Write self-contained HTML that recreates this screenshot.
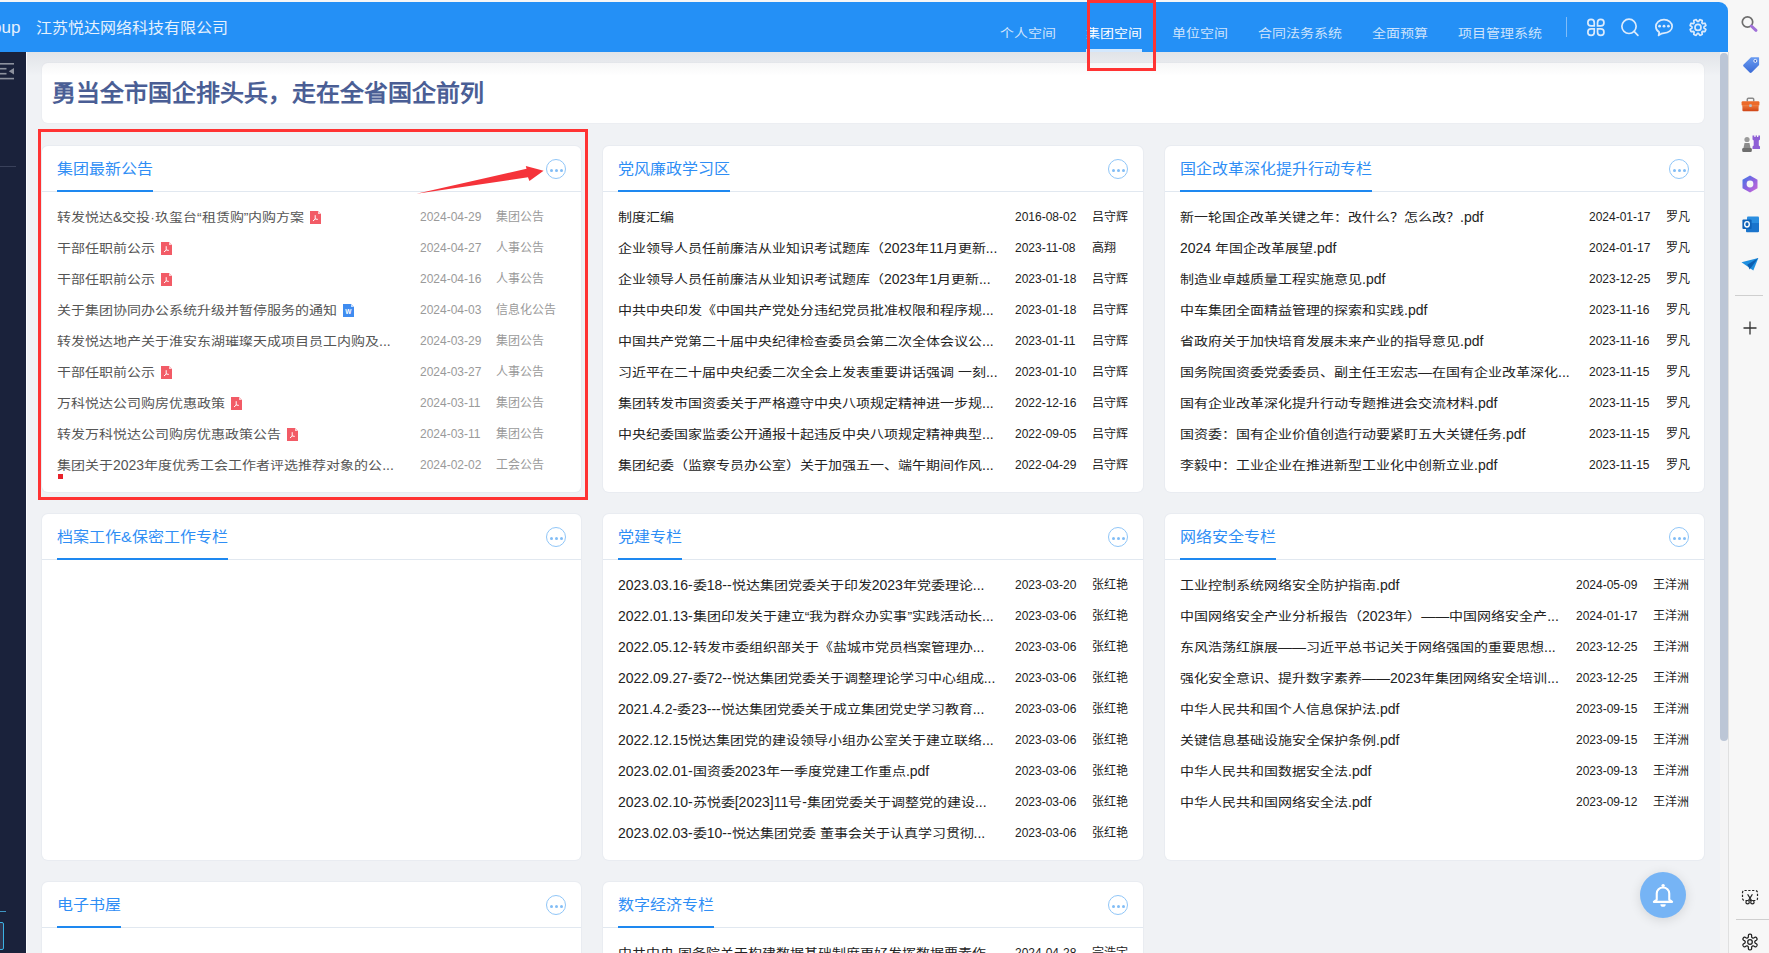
<!DOCTYPE html>
<html lang="zh-CN"><head><meta charset="utf-8"><title>集团空间</title>
<style>
*{margin:0;padding:0;box-sizing:border-box}
html,body{width:1769px;height:953px;overflow:hidden;background:#f6f6f6;font-family:"Liberation Sans",sans-serif}
.abs{position:absolute}
#top{position:absolute;left:0;top:2px;width:1728px;height:50px;background:#2490f6;border-top-right-radius:9px}
#brand{position:absolute;left:0;top:16px;font-size:16px;line-height:20px;color:#e6f1fd;white-space:nowrap}
#brand b{position:absolute;left:-8px;top:0;font-weight:normal;font-size:17px}
#brand span{position:absolute;left:36px;top:0}
.nav{position:absolute;top:22px;font-size:14px;line-height:18px;color:#cfe4fc;white-space:nowrap}
.nav.on{color:#fff}
#navline{position:absolute;left:1086px;top:47px;width:56px;height:3px;background:#d4e8fd}
#vdiv{position:absolute;left:1566px;top:15px;width:1px;height:20px;background:#7fbcf8}
.ti{position:absolute;top:15px}
#side{position:absolute;left:0;top:52px;width:27px;height:901px;background:#1a223b;border-right:1px solid #fcfdff}
#main{position:absolute;left:27px;top:52px;width:1693px;height:901px;background:#f0f2f5}
#sbar{position:absolute;left:1720px;top:52px;width:8px;height:901px;background:#f4f4f5}
#thumb{position:absolute;left:1720px;top:53px;width:8px;height:688px;background:#bcc6d6;border-radius:4px}
#rp{position:absolute;left:1728px;top:0;width:41px;height:953px;background:#f7f7f7}
#rpline{position:absolute;left:1728px;top:52px;width:1px;height:901px;background:#e0e0e0}
#hshadow{position:absolute;left:27px;top:52px;width:1693px;height:24px;background:linear-gradient(rgba(40,50,70,.075),rgba(40,50,70,0))}
.banner{position:absolute;left:42px;top:63px;width:1662px;height:60px;background:#fff;border-radius:6px;box-shadow:0 0 0 1px #eceef2}
.banner h1{position:absolute;left:10px;top:1px;font-size:24px;line-height:60px;font-weight:bold;color:#4a5e95;white-space:nowrap}
.card{position:absolute;height:346px;background:#fff;border-radius:6px;box-shadow:0 0 0 1px #e9ecf1}
.ch{position:absolute;left:0;top:0;width:100%;height:46px;border-bottom:1px solid #e1e8f0}
.ct{position:absolute;left:15px;top:13px;font-size:16px;line-height:20px;color:#2f8ef5;white-space:nowrap;padding-bottom:11px;border-bottom:2px solid #1e88f0}
.more{position:absolute;right:15px;top:13px;width:20px;height:20px;border:1px solid #90c6f8;border-radius:50%}
.more i{position:absolute;top:9px;width:3px;height:3px;border-radius:50%;background:#82bdf6}
.more i:nth-child(1){left:2.5px}.more i:nth-child(2){left:7.5px}.more i:nth-child(3){left:12.5px}
.row{position:absolute;left:0;width:100%;height:18px;white-space:nowrap}
.rt{position:absolute;left:15px;top:0;font-size:14px;line-height:18px;color:#222}
.rd,.ra{position:absolute;top:2px;font-size:12px;line-height:14px;color:#222}
.row.g .rt{color:#555}
.row.g .rd,.row.g .ra{color:#9a9a9a}
.fi{vertical-align:-2px;margin-left:6px}
#redbox1{position:absolute;left:38px;top:129px;width:550px;height:371px;border:3px solid #ff3333}
#redbox2{position:absolute;left:1087px;top:0;width:69px;height:71px;border:3px solid #ff3333}
#bell{position:absolute;left:1640px;top:872px;width:46px;height:46px;border-radius:50%;background:#76b4f5;box-shadow:0 2px 12px rgba(0,0,0,.12)}
.ri{position:absolute;left:12px}
.k{display:inline-block;transform:translateY(1px) scaleY(.86)}
.k16{display:inline-block;font-style:normal;transform:scaleY(.9)}
.k24{display:inline-block;transform:scaleY(.93)}

</style></head><body>
<div id="top">
  <div id="brand"><b>oup</b><span><i class="k16">江苏悦达网络科技有限公司</i></span></div>
  <div class="nav" style="left:1000px"><span class="k">个人空间</span></div>
  <div class="nav on" style="left:1086px"><span class="k">集团空间</span></div>
  <div class="nav" style="left:1172px"><span class="k">单位空间</span></div>
  <div class="nav" style="left:1258px"><span class="k">合同法务系统</span></div>
  <div class="nav" style="left:1372px"><span class="k">全面预算</span></div>
  <div class="nav" style="left:1458px"><span class="k">项目管理系统</span></div>
  <div id="navline"></div>
  <div id="vdiv"></div>
</div>
<svg style="position:absolute;left:0;top:0" width="1728" height="52" fill="none" stroke="#dcebfc" stroke-width="1.7">
  <path d="M1594.25 25.85H1591.05A3.2 3.2 0 1 1 1594.25 22.65Z"/>
  <path d="M1597.55 25.85H1600.75A3.2 3.2 0 1 0 1597.55 22.65Z"/>
  <path d="M1594.25 28.95H1591.05A3.2 3.2 0 1 0 1594.25 32.15Z"/>
  <path d="M1597.55 28.95H1600.75A3.2 3.2 0 1 1 1597.55 32.15Z"/>
  <circle cx="1629" cy="26.35" r="7.15"/><path d="M1634.1 31.4L1637.9 35.3" stroke-linecap="round"/>
  <path d="M1659.3 32.2C1657 30.8 1655.85 28.7 1655.85 26.4C1655.85 22.6 1659.5 19.55 1664 19.55C1668.5 19.55 1672.15 22.6 1672.15 26.4C1672.15 30.2 1668.5 33.1 1664 33.1C1662.2 33.1 1660.6 33.9 1658.6 35.4Z" stroke-linejoin="round"/>
  <circle cx="1659.6" cy="26.2" r="1.4" fill="#dcebfc" stroke="none"/><circle cx="1664" cy="26.2" r="1.4" fill="#dcebfc" stroke="none"/><circle cx="1668.4" cy="26.2" r="1.4" fill="#dcebfc" stroke="none"/>
  <path d="M1703.98 27.97 L1705.88 29.34 A8.1 8.1 0 0 1 1704.91 31.68 L1702.59 31.31 A6.0 6.0 0 0 1 1701.86 32.04 L1702.23 34.36 A8.1 8.1 0 0 1 1699.89 35.33 L1698.52 33.43 A6.0 6.0 0 0 1 1697.48 33.43 L1696.11 35.33 A8.1 8.1 0 0 1 1693.77 34.36 L1694.14 32.04 A6.0 6.0 0 0 1 1693.41 31.31 L1691.09 31.68 A8.1 8.1 0 0 1 1690.12 29.34 L1692.02 27.97 A6.0 6.0 0 0 1 1692.02 26.93 L1690.12 25.56 A8.1 8.1 0 0 1 1691.09 23.22 L1693.41 23.59 A6.0 6.0 0 0 1 1694.14 22.86 L1693.77 20.54 A8.1 8.1 0 0 1 1696.11 19.57 L1697.48 21.47 A6.0 6.0 0 0 1 1698.52 21.47 L1699.89 19.57 A8.1 8.1 0 0 1 1702.23 20.54 L1701.86 22.86 A6.0 6.0 0 0 1 1702.59 23.59 L1704.91 23.22 A8.1 8.1 0 0 1 1705.88 25.56 L1703.98 26.93 A6.0 6.0 0 0 1 1703.98 27.97Z" stroke-linejoin="round"/><circle cx="1698" cy="27.4" r="3.0"/>
</svg>
<div id="side">
  <svg style="position:absolute;left:0;top:11px" width="16" height="18" viewBox="0 0 16 18">
    <rect x="0" y="0" width="14" height="1.6" fill="#8c919d"/><rect x="0" y="4.9" width="6.5" height="1.6" fill="#8c919d"/>
    <rect x="0" y="9.9" width="6.5" height="1.6" fill="#8c919d"/><rect x="0" y="14.8" width="14" height="1.6" fill="#8c919d"/>
    <path d="M14 5L8.8 8.2L14 11.4Z" fill="#8c919d"/>
  </svg>
  <div style="position:absolute;left:0;top:114px;width:16px;height:1px;background:#39415a"></div>
  <div style="position:absolute;left:0;top:859px;width:6px;height:1px;background:#3f95c2"></div>
  <div style="position:absolute;left:-3px;top:870px;width:7px;height:28px;border:1px solid #3bb2e4;border-radius:2px;background:#2f3651"></div>
</div>
<div id="main"></div>
<div id="sbar"></div><div id="thumb"></div>
<div id="rp">
  <svg class="ri" style="top:14px" width="20" height="20" viewBox="0 0 20 20">
    <circle cx="7.5" cy="8" r="5.2" fill="none" stroke="#6e6e6e" stroke-width="1.7"/>
    <path d="M11.3 12L16 16.3" stroke="#a070d8" stroke-width="3" stroke-linecap="round"/>
  </svg>
  <svg class="ri" style="top:54px" width="22" height="20" viewBox="0 0 22 20">
    <defs><linearGradient id="tg" x1="0" y1="0" x2="0" y2="1"><stop offset="0" stop-color="#6a9cf2"/><stop offset="1" stop-color="#3b6bd6"/></linearGradient></defs>
    <path d="M11 3.2H18.6C18.9 3.2 19.1 3.4 19.1 3.7V11L11.6 18.5C11 19.1 10.2 19.1 9.6 18.5L3.6 12.5C3 11.9 3 11.1 3.6 10.5Z" fill="url(#tg)"/>
    <circle cx="15.3" cy="6.9" r="1.5" fill="#3d64c4" stroke="#fff" stroke-width="0.9"/>
  </svg>
  <svg class="ri" style="top:94px" width="22" height="20" viewBox="0 0 22 20">
    <defs><linearGradient id="tbg" x1="0" y1="0" x2="0" y2="1"><stop offset="0" stop-color="#f07a3a"/><stop offset="1" stop-color="#cf4416"/></linearGradient></defs>
    <path d="M7.3 7.5V5.3C7.3 4.7 7.8 4.2 8.4 4.2H12.6C13.2 4.2 13.7 4.7 13.7 5.3V7.5" fill="none" stroke="#8a8a8a" stroke-width="1.5"/>
    <rect x="1.6" y="7.3" width="17.8" height="4.4" rx="1" fill="#ec6a2a"/>
    <rect x="2.4" y="11.2" width="16.2" height="6" rx="1" fill="url(#tbg)"/>
    <rect x="9.2" y="10.2" width="2.6" height="2.8" rx="0.7" fill="#b9c4cf"/>
  </svg>
  <svg class="ri" style="top:134px" width="22" height="20" viewBox="0 0 22 20">
    <circle cx="7" cy="5.5" r="2.6" fill="#9a9a9a"/><path d="M4.5 9H9.5L10.5 14H3.5Z" fill="#8c8c8c"/><rect x="2.2" y="14" width="9.6" height="4" rx="1.2" fill="#6e6e6e"/>
    <path d="M12.5 1.5H14.3V3H15.6V1.5H17V3H18.3V1.5H20V5.5L18.8 6.5V11.5L20 12.5V15H12.5V12.5L13.7 11.5V6.5L12.5 5.5Z" fill="#8e5fd6"/>
  </svg>
  <svg class="ri" style="top:174px" width="20" height="20" viewBox="0 0 20 20">
    <defs><linearGradient id="mg" x1="0" y1="0" x2="1" y2="1"><stop offset="0" stop-color="#3a7ae8"/><stop offset="0.5" stop-color="#8a62e0"/><stop offset="1" stop-color="#d26ad8"/></linearGradient></defs>
    <path d="M10 1.5L17.5 5.8V14.2L10 18.5L2.5 14.2V5.8Z" fill="url(#mg)"/>
    <circle cx="10" cy="10" r="3.4" fill="#f7f7f7"/>
  </svg>
  <svg class="ri" style="top:214px" width="22" height="20" viewBox="0 0 22 20">
    <rect x="7" y="2.4" width="12" height="9.6" rx="1" fill="#2a8ee0"/>
    <path d="M6 9L19 9V17.3C19 17.8 18.6 18.2 18.1 18.2H6.9C6.4 18.2 6 17.8 6 17.3Z" fill="#1a74cc"/>
    <rect x="2.4" y="5.6" width="9.2" height="9.4" rx="1" fill="#0f62b8"/>
    <ellipse cx="7" cy="10.3" rx="2.3" ry="2.7" fill="none" stroke="#fff" stroke-width="1.4"/>
  </svg>
  <svg class="ri" style="top:254px" width="20" height="20" viewBox="0 0 20 20">
    <path d="M1.5 8.3L18.3 4L13.3 16.5Z" fill="#1e8fe0"/><path d="M7.2 10.8L18.3 4L9.6 15.5L8.6 13Z" fill="#0d5fb0"/>
  </svg>
  <div style="position:absolute;left:7px;top:295px;width:28px;height:1px;background:#cfcfcf"></div>
  <svg class="ri" style="top:318px" width="20" height="20" viewBox="0 0 20 20"><path d="M10 3.5V16.5M3.5 10H16.5" stroke="#333" stroke-width="1.3"/></svg>
  <svg class="ri" style="top:887px" width="20" height="20" viewBox="0 0 20 20" fill="none" stroke="#222" stroke-width="1.2">
    <rect x="2.5" y="3.5" width="15" height="10" rx="2" stroke-dasharray="2.2 1.6"/>
    <path d="M7.6 7.2L11.4 13.4M12.4 7.2L8.6 13.4"/><circle cx="7.6" cy="15.2" r="1.7"/><circle cx="12.4" cy="15.2" r="1.7"/>
  </svg>
  <div style="position:absolute;left:8px;top:919px;width:33px;height:1px;background:#cfcfcf"></div>
  <svg class="ri" style="top:932px" width="20" height="20" viewBox="0 0 20 20" fill="none" stroke="#222" stroke-width="1.25" stroke-linejoin="round">
    <path d="M14.80 10.00 L14.80 10.17 L14.81 10.34 L14.82 10.51 L14.87 10.68 L14.99 10.88 L15.27 11.12 L15.78 11.44 L16.39 11.83 L16.86 12.23 L17.08 12.58 L17.12 12.88 L17.08 13.15 L17.00 13.41 L16.88 13.66 L16.75 13.90 L16.61 14.13 L16.45 14.35 L16.27 14.56 L16.05 14.73 L15.77 14.84 L15.36 14.82 L14.78 14.62 L14.14 14.28 L13.61 14.01 L13.26 13.88 L13.03 13.87 L12.85 13.92 L12.69 13.99 L12.55 14.07 L12.40 14.16 L12.26 14.24 L12.11 14.33 L11.97 14.43 L11.84 14.56 L11.73 14.76 L11.67 15.13 L11.64 15.72 L11.61 16.45 L11.50 17.05 L11.31 17.42 L11.07 17.61 L10.81 17.71 L10.54 17.76 L10.27 17.79 L10.00 17.80 L9.73 17.79 L9.46 17.76 L9.19 17.71 L8.93 17.61 L8.69 17.42 L8.50 17.05 L8.39 16.45 L8.36 15.72 L8.33 15.13 L8.27 14.76 L8.16 14.56 L8.03 14.43 L7.89 14.33 L7.74 14.24 L7.60 14.16 L7.45 14.07 L7.31 13.99 L7.15 13.92 L6.97 13.87 L6.74 13.88 L6.39 14.01 L5.86 14.28 L5.22 14.62 L4.64 14.82 L4.23 14.84 L3.95 14.73 L3.73 14.56 L3.55 14.35 L3.39 14.13 L3.25 13.90 L3.12 13.66 L3.00 13.41 L2.92 13.15 L2.88 12.88 L2.92 12.58 L3.14 12.23 L3.61 11.83 L4.22 11.44 L4.73 11.12 L5.01 10.88 L5.13 10.68 L5.18 10.51 L5.19 10.34 L5.20 10.17 L5.20 10.00 L5.20 9.83 L5.19 9.66 L5.18 9.49 L5.13 9.32 L5.01 9.12 L4.73 8.88 L4.22 8.56 L3.61 8.17 L3.14 7.77 L2.92 7.42 L2.88 7.12 L2.92 6.85 L3.00 6.59 L3.12 6.34 L3.25 6.10 L3.39 5.87 L3.55 5.65 L3.73 5.44 L3.95 5.27 L4.23 5.16 L4.64 5.18 L5.22 5.38 L5.86 5.72 L6.39 5.99 L6.74 6.12 L6.97 6.13 L7.15 6.08 L7.31 6.01 L7.45 5.93 L7.60 5.84 L7.74 5.76 L7.89 5.67 L8.03 5.57 L8.16 5.44 L8.27 5.24 L8.33 4.87 L8.36 4.28 L8.39 3.55 L8.50 2.95 L8.69 2.58 L8.93 2.39 L9.19 2.29 L9.46 2.24 L9.73 2.21 L10.00 2.20 L10.27 2.21 L10.54 2.24 L10.81 2.29 L11.07 2.39 L11.31 2.58 L11.50 2.95 L11.61 3.55 L11.64 4.28 L11.67 4.87 L11.73 5.24 L11.84 5.44 L11.97 5.57 L12.11 5.67 L12.26 5.76 L12.40 5.84 L12.55 5.93 L12.69 6.01 L12.85 6.08 L13.03 6.13 L13.26 6.12 L13.61 5.99 L14.14 5.72 L14.78 5.38 L15.36 5.18 L15.77 5.16 L16.05 5.27 L16.27 5.44 L16.45 5.65 L16.61 5.87 L16.75 6.10 L16.88 6.34 L17.00 6.59 L17.08 6.85 L17.12 7.12 L17.08 7.42 L16.86 7.77 L16.39 8.17 L15.78 8.56 L15.27 8.88 L14.99 9.12 L14.87 9.32 L14.82 9.49 L14.81 9.66 L14.80 9.83Z"/><circle cx="10" cy="10" r="2.3"/>
  </svg>
</div>
<div class="banner"><h1><span class="k24">勇当全市国企排头兵，走在全省国企前列</span></h1></div>
<div class="card" style="left:42px;top:146px;width:539px"><div class="ch"><span class="ct"><span class="k16">集团最新公告</span></span><span class="more"><i></i><i></i><i></i></span></div><div class="row g" style="top:62px"><span class="rt"><span class="k">转发悦达</span>&amp;<span class="k">交投·玖玺台“租赁购”内购方案</span><svg class="fi" width="11" height="13" viewBox="0 0 11 13"><path d="M0 0H8L11 3V13H0Z" fill="#f25b66"/><path d="M8 0V3H11" fill="#fbd0d3"/><path d="M5.2 4.2V8M5.2 8L7.8 8.4M5.2 8L3 10" stroke="#fff" stroke-width="1" fill="none"/></svg></span><span class="rd" style="left:378px">2024-04-29</span><span class="ra" style="left:454px">集团公告</span></div><div class="row g" style="top:93px"><span class="rt"><span class="k">干部任职前公示</span><svg class="fi" width="11" height="13" viewBox="0 0 11 13"><path d="M0 0H8L11 3V13H0Z" fill="#f25b66"/><path d="M8 0V3H11" fill="#fbd0d3"/><path d="M5.2 4.2V8M5.2 8L7.8 8.4M5.2 8L3 10" stroke="#fff" stroke-width="1" fill="none"/></svg></span><span class="rd" style="left:378px">2024-04-27</span><span class="ra" style="left:454px">人事公告</span></div><div class="row g" style="top:124px"><span class="rt"><span class="k">干部任职前公示</span><svg class="fi" width="11" height="13" viewBox="0 0 11 13"><path d="M0 0H8L11 3V13H0Z" fill="#f25b66"/><path d="M8 0V3H11" fill="#fbd0d3"/><path d="M5.2 4.2V8M5.2 8L7.8 8.4M5.2 8L3 10" stroke="#fff" stroke-width="1" fill="none"/></svg></span><span class="rd" style="left:378px">2024-04-16</span><span class="ra" style="left:454px">人事公告</span></div><div class="row g" style="top:155px"><span class="rt"><span class="k">关于集团协同办公系统升级并暂停服务的通知</span><svg class="fi" width="11" height="13" viewBox="0 0 11 13"><path d="M0 0H8L11 3V13H0Z" fill="#3f8cf0"/><path d="M8 0V3H11" fill="#c9defc"/><text x="5.3" y="9.6" font-size="6.5" font-family="Liberation Sans" font-weight="bold" fill="#fff" text-anchor="middle">W</text></svg></span><span class="rd" style="left:378px">2024-04-03</span><span class="ra" style="left:454px">信息化公告</span></div><div class="row g" style="top:186px"><span class="rt"><span class="k">转发悦达地产关于淮安东湖璀璨天成项目员工内购及</span>...</span><span class="rd" style="left:378px">2024-03-29</span><span class="ra" style="left:454px">集团公告</span></div><div class="row g" style="top:217px"><span class="rt"><span class="k">干部任职前公示</span><svg class="fi" width="11" height="13" viewBox="0 0 11 13"><path d="M0 0H8L11 3V13H0Z" fill="#f25b66"/><path d="M8 0V3H11" fill="#fbd0d3"/><path d="M5.2 4.2V8M5.2 8L7.8 8.4M5.2 8L3 10" stroke="#fff" stroke-width="1" fill="none"/></svg></span><span class="rd" style="left:378px">2024-03-27</span><span class="ra" style="left:454px">人事公告</span></div><div class="row g" style="top:248px"><span class="rt"><span class="k">万科悦达公司购房优惠政策</span><svg class="fi" width="11" height="13" viewBox="0 0 11 13"><path d="M0 0H8L11 3V13H0Z" fill="#f25b66"/><path d="M8 0V3H11" fill="#fbd0d3"/><path d="M5.2 4.2V8M5.2 8L7.8 8.4M5.2 8L3 10" stroke="#fff" stroke-width="1" fill="none"/></svg></span><span class="rd" style="left:378px">2024-03-11</span><span class="ra" style="left:454px">集团公告</span></div><div class="row g" style="top:279px"><span class="rt"><span class="k">转发万科悦达公司购房优惠政策公告</span><svg class="fi" width="11" height="13" viewBox="0 0 11 13"><path d="M0 0H8L11 3V13H0Z" fill="#f25b66"/><path d="M8 0V3H11" fill="#fbd0d3"/><path d="M5.2 4.2V8M5.2 8L7.8 8.4M5.2 8L3 10" stroke="#fff" stroke-width="1" fill="none"/></svg></span><span class="rd" style="left:378px">2024-03-11</span><span class="ra" style="left:454px">集团公告</span></div><div class="row g" style="top:310px"><span class="rt"><span class="k">集团关于</span>2023<span class="k">年度优秀工会工作者评选推荐对象的公</span>...</span><span class="rd" style="left:378px">2024-02-02</span><span class="ra" style="left:454px">工会公告</span></div></div>
<div class="card" style="left:603px;top:146px;width:540px"><div class="ch"><span class="ct"><span class="k16">党风廉政学习区</span></span><span class="more"><i></i><i></i><i></i></span></div><div class="row d" style="top:62px"><span class="rt"><span class="k">制度汇编</span></span><span class="rd" style="left:412px">2016-08-02</span><span class="ra" style="left:489px">吕守辉</span></div><div class="row d" style="top:93px"><span class="rt"><span class="k">企业领导人员任前廉洁从业知识考试题库（</span>2023<span class="k">年</span>11<span class="k">月更新</span>...</span><span class="rd" style="left:412px">2023-11-08</span><span class="ra" style="left:489px">高翔</span></div><div class="row d" style="top:124px"><span class="rt"><span class="k">企业领导人员任前廉洁从业知识考试题库（</span>2023<span class="k">年</span>1<span class="k">月更新</span>...</span><span class="rd" style="left:412px">2023-01-18</span><span class="ra" style="left:489px">吕守辉</span></div><div class="row d" style="top:155px"><span class="rt"><span class="k">中共中央印发《中国共产党处分违纪党员批准权限和程序规</span>...</span><span class="rd" style="left:412px">2023-01-18</span><span class="ra" style="left:489px">吕守辉</span></div><div class="row d" style="top:186px"><span class="rt"><span class="k">中国共产党第二十届中央纪律检查委员会第二次全体会议公</span>...</span><span class="rd" style="left:412px">2023-01-11</span><span class="ra" style="left:489px">吕守辉</span></div><div class="row d" style="top:217px"><span class="rt"><span class="k">习近平在二十届中央纪委二次全会上发表重要讲话强调</span> <span class="k">一刻</span>...</span><span class="rd" style="left:412px">2023-01-10</span><span class="ra" style="left:489px">吕守辉</span></div><div class="row d" style="top:248px"><span class="rt"><span class="k">集团转发市国资委关于严格遵守中央八项规定精神进一步规</span>...</span><span class="rd" style="left:412px">2022-12-16</span><span class="ra" style="left:489px">吕守辉</span></div><div class="row d" style="top:279px"><span class="rt"><span class="k">中央纪委国家监委公开通报十起违反中央八项规定精神典型</span>...</span><span class="rd" style="left:412px">2022-09-05</span><span class="ra" style="left:489px">吕守辉</span></div><div class="row d" style="top:310px"><span class="rt"><span class="k">集团纪委（监察专员办公室）关于加强五一、端午期间作风</span>...</span><span class="rd" style="left:412px">2022-04-29</span><span class="ra" style="left:489px">吕守辉</span></div></div>
<div class="card" style="left:1165px;top:146px;width:539px"><div class="ch"><span class="ct"><span class="k16">国企改革深化提升行动专栏</span></span><span class="more"><i></i><i></i><i></i></span></div><div class="row d" style="top:62px"><span class="rt"><span class="k">新一轮国企改革关键之年：改什么？怎么改？</span>.pdf</span><span class="rd" style="left:424px">2024-01-17</span><span class="ra" style="left:501px">罗凡</span></div><div class="row d" style="top:93px"><span class="rt">2024 <span class="k">年国企改革展望</span>.pdf</span><span class="rd" style="left:424px">2024-01-17</span><span class="ra" style="left:501px">罗凡</span></div><div class="row d" style="top:124px"><span class="rt"><span class="k">制造业卓越质量工程实施意见</span>.pdf</span><span class="rd" style="left:424px">2023-12-25</span><span class="ra" style="left:501px">罗凡</span></div><div class="row d" style="top:155px"><span class="rt"><span class="k">中车集团全面精益管理的探索和实践</span>.pdf</span><span class="rd" style="left:424px">2023-11-16</span><span class="ra" style="left:501px">罗凡</span></div><div class="row d" style="top:186px"><span class="rt"><span class="k">省政府关于加快培育发展未来产业的指导意见</span>.pdf</span><span class="rd" style="left:424px">2023-11-16</span><span class="ra" style="left:501px">罗凡</span></div><div class="row d" style="top:217px"><span class="rt"><span class="k">国务院国资委党委委员、副主任王宏志—在国有企业改革深化</span>...</span><span class="rd" style="left:424px">2023-11-15</span><span class="ra" style="left:501px">罗凡</span></div><div class="row d" style="top:248px"><span class="rt"><span class="k">国有企业改革深化提升行动专题推进会交流材料</span>.pdf</span><span class="rd" style="left:424px">2023-11-15</span><span class="ra" style="left:501px">罗凡</span></div><div class="row d" style="top:279px"><span class="rt"><span class="k">国资委：国有企业价值创造行动要紧盯五大关键任务</span>.pdf</span><span class="rd" style="left:424px">2023-11-15</span><span class="ra" style="left:501px">罗凡</span></div><div class="row d" style="top:310px"><span class="rt"><span class="k">李毅中：工业企业在推进新型工业化中创新立业</span>.pdf</span><span class="rd" style="left:424px">2023-11-15</span><span class="ra" style="left:501px">罗凡</span></div></div>
<div class="card" style="left:42px;top:514px;width:539px"><div class="ch"><span class="ct"><span class="k16">档案工作&amp;保密工作专栏</span></span><span class="more"><i></i><i></i><i></i></span></div></div>
<div class="card" style="left:603px;top:514px;width:540px"><div class="ch"><span class="ct"><span class="k16">党建专栏</span></span><span class="more"><i></i><i></i><i></i></span></div><div class="row d" style="top:62px"><span class="rt">2023.03.16-<span class="k">委</span>18--<span class="k">悦达集团党委关于印发</span>2023<span class="k">年党委理论</span>...</span><span class="rd" style="left:412px">2023-03-20</span><span class="ra" style="left:489px">张红艳</span></div><div class="row d" style="top:93px"><span class="rt">2022.01.13-<span class="k">集团印发关于建立“我为群众办实事”实践活动长</span>...</span><span class="rd" style="left:412px">2023-03-06</span><span class="ra" style="left:489px">张红艳</span></div><div class="row d" style="top:124px"><span class="rt">2022.05.12-<span class="k">转发市委组织部关于《盐城市党员档案管理办</span>...</span><span class="rd" style="left:412px">2023-03-06</span><span class="ra" style="left:489px">张红艳</span></div><div class="row d" style="top:155px"><span class="rt">2022.09.27-<span class="k">委</span>72--<span class="k">悦达集团党委关于调整理论学习中心组成</span>...</span><span class="rd" style="left:412px">2023-03-06</span><span class="ra" style="left:489px">张红艳</span></div><div class="row d" style="top:186px"><span class="rt">2021.4.2-<span class="k">委</span>23---<span class="k">悦达集团党委关于成立集团党史学习教育</span>...</span><span class="rd" style="left:412px">2023-03-06</span><span class="ra" style="left:489px">张红艳</span></div><div class="row d" style="top:217px"><span class="rt">2022.12.15<span class="k">悦达集团党的建设领导小组办公室关于建立联络</span>...</span><span class="rd" style="left:412px">2023-03-06</span><span class="ra" style="left:489px">张红艳</span></div><div class="row d" style="top:248px"><span class="rt">2023.02.01-<span class="k">国资委</span>2023<span class="k">年一季度党建工作重点</span>.pdf</span><span class="rd" style="left:412px">2023-03-06</span><span class="ra" style="left:489px">张红艳</span></div><div class="row d" style="top:279px"><span class="rt">2023.02.10-<span class="k">苏悦委</span>[2023]11<span class="k">号</span>-<span class="k">集团党委关于调整党的建设</span>...</span><span class="rd" style="left:412px">2023-03-06</span><span class="ra" style="left:489px">张红艳</span></div><div class="row d" style="top:310px"><span class="rt">2023.02.03-<span class="k">委</span>10--<span class="k">悦达集团党委</span> <span class="k">董事会关于认真学习贯彻</span>...</span><span class="rd" style="left:412px">2023-03-06</span><span class="ra" style="left:489px">张红艳</span></div></div>
<div class="card" style="left:1165px;top:514px;width:539px"><div class="ch"><span class="ct"><span class="k16">网络安全专栏</span></span><span class="more"><i></i><i></i><i></i></span></div><div class="row d" style="top:62px"><span class="rt"><span class="k">工业控制系统网络安全防护指南</span>.pdf</span><span class="rd" style="left:411px">2024-05-09</span><span class="ra" style="left:488px">王洋洲</span></div><div class="row d" style="top:93px"><span class="rt"><span class="k">中国网络安全产业分析报告（</span>2023<span class="k">年）——中国网络安全产</span>...</span><span class="rd" style="left:411px">2024-01-17</span><span class="ra" style="left:488px">王洋洲</span></div><div class="row d" style="top:124px"><span class="rt"><span class="k">东风浩荡红旗展——习近平总书记关于网络强国的重要思想</span>...</span><span class="rd" style="left:411px">2023-12-25</span><span class="ra" style="left:488px">王洋洲</span></div><div class="row d" style="top:155px"><span class="rt"><span class="k">强化安全意识、提升数字素养——</span>2023<span class="k">年集团网络安全培训</span>...</span><span class="rd" style="left:411px">2023-12-25</span><span class="ra" style="left:488px">王洋洲</span></div><div class="row d" style="top:186px"><span class="rt"><span class="k">中华人民共和国个人信息保护法</span>.pdf</span><span class="rd" style="left:411px">2023-09-15</span><span class="ra" style="left:488px">王洋洲</span></div><div class="row d" style="top:217px"><span class="rt"><span class="k">关键信息基础设施安全保护条例</span>.pdf</span><span class="rd" style="left:411px">2023-09-15</span><span class="ra" style="left:488px">王洋洲</span></div><div class="row d" style="top:248px"><span class="rt"><span class="k">中华人民共和国数据安全法</span>.pdf</span><span class="rd" style="left:411px">2023-09-13</span><span class="ra" style="left:488px">王洋洲</span></div><div class="row d" style="top:279px"><span class="rt"><span class="k">中华人民共和国网络安全法</span>.pdf</span><span class="rd" style="left:411px">2023-09-12</span><span class="ra" style="left:488px">王洋洲</span></div></div>
<div class="card" style="left:42px;top:882px;width:539px"><div class="ch"><span class="ct"><span class="k16">电子书屋</span></span><span class="more"><i></i><i></i><i></i></span></div></div>
<div class="card" style="left:603px;top:882px;width:540px"><div class="ch"><span class="ct"><span class="k16">数字经济专栏</span></span><span class="more"><i></i><i></i><i></i></span></div><div class="row d" style="top:62px"><span class="rt"><span class="k">中共中央</span> <span class="k">国务院关于构建数据基础制度更好发挥数据要素作</span>...</span><span class="rd" style="left:412px">2024-04-28</span><span class="ra" style="left:489px">宗浩宇</span></div></div>
<svg style="position:absolute;left:0;top:0" width="600" height="500">
  <path d="M416.5 193.7L526.5 168.8L525.8 166L543.6 170.7L529.4 181L528 177.3Z" fill="#f5333a"/>
  <rect x="58" y="474" width="5" height="5" fill="#e8222b"/>
</svg>
<div id="hshadow"></div>
<div id="rpline"></div>
<div id="redbox1"></div>
<div id="redbox2"></div>
<div id="bell">
  <svg width="46" height="46" viewBox="0 0 46 46">
    <path d="M16.75 27.6V21.6C16.75 18.1 19.5 15.5 23 15.5C26.5 15.5 29.25 18.1 29.25 21.6V27.6L32.1 29.9H13.9Z" fill="none" stroke="#fff" stroke-width="2.1" stroke-linejoin="round"/>
    <ellipse cx="23.1" cy="13.5" rx="1.7" ry="1.5" fill="#fff"/>
    <path d="M20.4 32.2H25.7A2.65 2.65 0 0 1 20.4 32.2Z" fill="#fff"/>
  </svg>
</div>

</body></html>
